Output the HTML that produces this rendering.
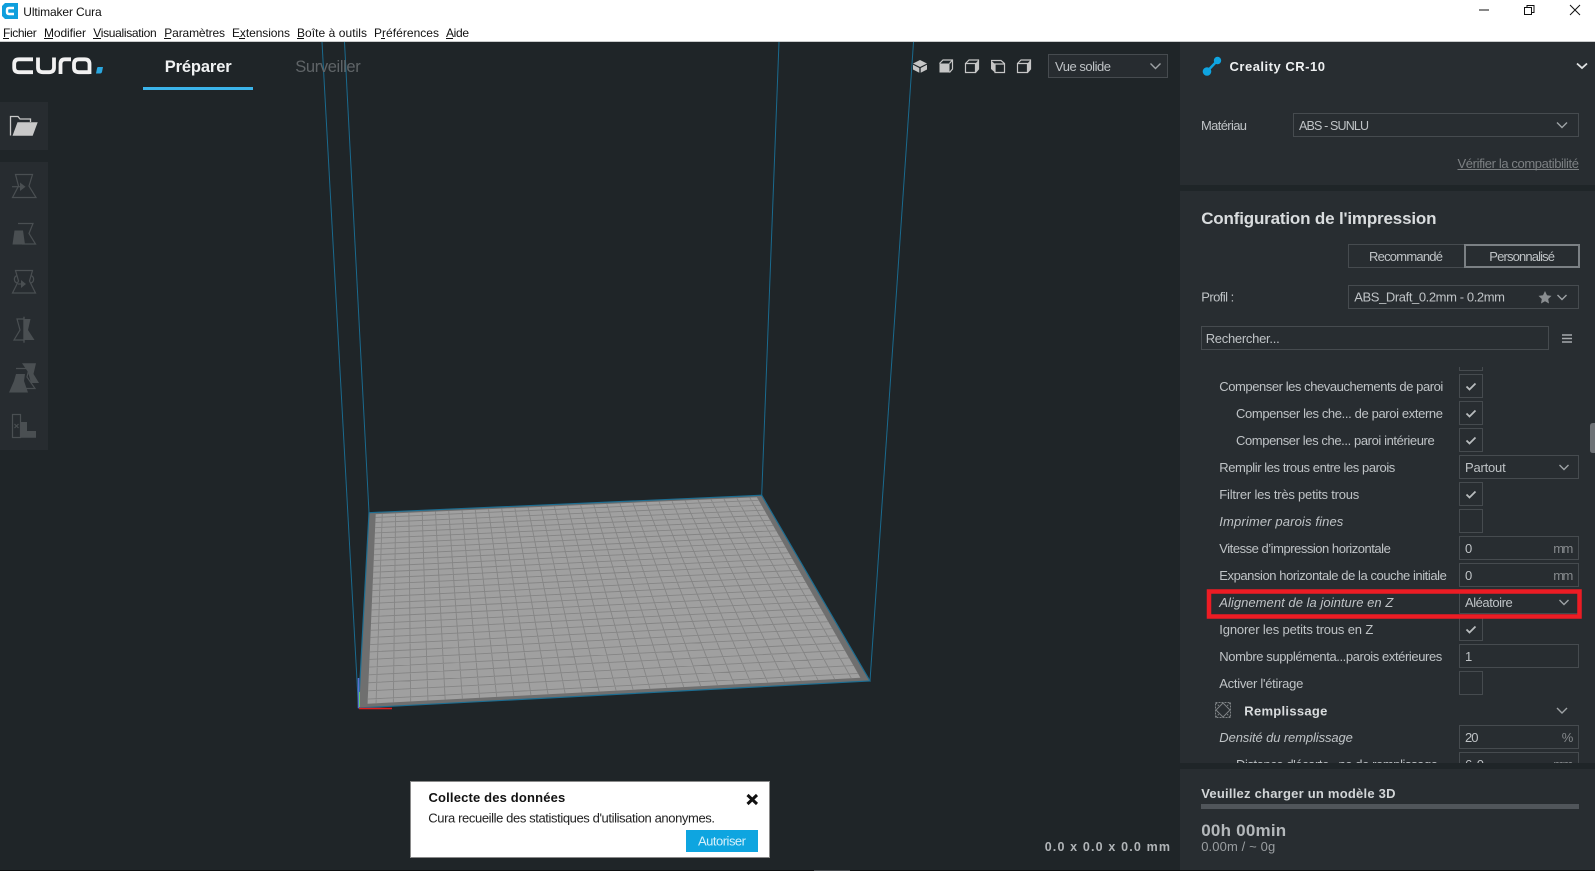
<!DOCTYPE html>
<html lang="fr"><head><meta charset="utf-8"><title>Ultimaker Cura</title>
<style>
html,body{margin:0;padding:0;background:#1f2528;overflow:hidden}
svg{display:block}
text{font-family:"Liberation Sans",sans-serif;font-size:13px;fill:#bfc3c6;white-space:pre}
.m{font-size:12px;fill:#111}
.b{font-weight:bold}
.i{font-style:italic}
.box{fill:none;stroke:#464b4f;stroke-width:1;shape-rendering:crispEdges}
.chev{fill:none;stroke:#9fa3a6;stroke-width:1.4}
.ck{fill:none;stroke:#b8bcbe;stroke-width:1.8}
.u{stroke:#111;stroke-width:1;shape-rendering:crispEdges}
.ti{fill:none;stroke:#4a4f52;stroke-width:1.2}
.tf{fill:#4a4f52}
.vi{fill:none;stroke:#c6c6c6;stroke-width:1.2}
.vf{fill:#c6c6c6}
</style></head><body>
<svg xmlns="http://www.w3.org/2000/svg" width="1595" height="871" viewBox="0 0 1595 871">
<!-- backgrounds -->
<rect width="1595" height="871" fill="#1f2528"/>
<rect width="1595" height="41" fill="#fff"/>
<rect y="41" width="1595" height="1" fill="#c9cbcc"/>
<rect y="870" width="1595" height="1" fill="#0c0e0f"/>
<rect x="814" y="870" width="36" height="1" fill="#44484b"/>

<!-- title bar -->
<path d="M5 3H18V19H5L2 16V6Z" fill="#0f9fdd"/>
<path d="M14 8H9Q7 8 7 10V12Q7 14 9 14H14" fill="none" stroke="#fff" stroke-width="2.4"/>
<text class="m" x="23.3" y="16" textLength="78.4">Ultimaker Cura</text>
<g>
<text class="m" x="3" y="37" textLength="33.7">Fichier</text><path class="u" d="M3 38.500H9"/>
<text class="m" x="44" y="37" textLength="42">Modifier</text><path class="u" d="M44 38.500H53"/>
<text class="m" x="93.300" y="37" textLength="63.400">Visualisation</text><path class="u" d="M93 38.500H101"/>
<text class="m" x="164.300" y="37" textLength="60.700">Paramètres</text><path class="u" d="M164 38.500H171"/>
<text class="m" x="232" y="37" textLength="58">Extensions</text><path class="u" d="M239 38.500H245"/>
<text class="m" x="297" y="37" textLength="70">Boîte à outils</text><path class="u" d="M297 38.500H304"/>
<text class="m" x="374" y="37" textLength="65">Préférences</text><path class="u" d="M381 38.500H385"/>
<text class="m" x="446" y="37" textLength="23">Aide</text><path class="u" d="M446 38.500H453"/>
</g>
<path d="M1479 10H1489" stroke="#111" stroke-width="1" shape-rendering="crispEdges"/>
<path d="M1524.500 7.500H1531.500V14.500H1524.500ZM1527 7.500V5.500H1534V12.500H1531.500" fill="none" stroke="#111" stroke-width="1" shape-rendering="crispEdges"/>
<path d="M1570 5L1580 15M1580 5L1570 15" stroke="#111" stroke-width="1"/>

<!-- build volume -->
<g fill="none" stroke="#1a6a8e" stroke-width="1">
<path d="M322 42L358.500 708"/>
<path d="M344.500 42L369 512.700"/>
<path d="M779 42L761.700 495.300"/>
<path d="M913.500 42L870 681"/>
</g>
<!-- bed -->
<g id="bed">
<polygon points="369,512.700 761.700,495.300 870,681 358.500,708" fill="#6f6f6f"/>
</g>
<g id="grid"></g>
<polygon points="369,512.700 761.700,495.300 870,681 358.500,708" fill="none" stroke="#1c6d91" stroke-width="1.200"/>
<path d="M358.500 678V708" stroke="#5a6fd0" stroke-width="1.500"/>
<path d="M359.500 692V707" stroke="#62c66a" stroke-width="1"/>
<path d="M359 708.500H392" stroke="#e01f1f" stroke-width="1.500"/>

<!-- logo -->
<g fill="none" stroke="#f1f1f1" stroke-width="3.800">
<path d="M33 59.300H19Q14.200 59.300 14.200 64V67.500Q14.200 72.200 19 72.200H33"/>
<path d="M38 57.500V67.500Q38 72.200 43 72.200H49Q54 72.200 54 67.500V57.500"/>
<path d="M60.500 74V64Q60.500 59.300 65 59.300H71"/>
<path d="M89.500 72.200H79Q74 72.200 74 67.500V64Q74 59.300 79 59.300H84.500Q89.500 59.300 89.500 64V74"/>
</g>
<path d="M98 67H103L102 72Q101.500 73.500 100 73.500H96L97 68.500Q97.200 67 98 67Z" fill="#2aa7df"/>
<text class="b" x="164.700" y="72" textLength="67" style="font-size:16.500px;fill:#f0f2f3">Préparer</text>
<rect x="143" y="87" width="110" height="3" fill="#3bb4ea"/>
<text x="295.300" y="72" textLength="65.400" style="font-size:16.500px;fill:#5f6467">Surveiller</text>

<!-- left toolbar -->
<rect y="102" width="48" height="48" fill="#272c30"/>
<rect y="162" width="48" height="288" fill="#272c30"/>
<path d="M10.500 135.500V116.500H18L20 119H30.500V122" fill="none" stroke="#c8c8c8" stroke-width="1.300"/>
<path d="M17.500 122.300H37.700L32.700 135.700H12.500Z" fill="#c8c8c8"/>
<!-- move -->
<path class="ti" d="M15.500 174.500H32.500L29 186L36 197.500H12.500L18.500 186Z"/>
<path d="M12 186.700H21" stroke="#4a4f52" stroke-width="1.200"/><path class="tf" d="M20 182.500L25.500 186.700L20 191Z"/>
<!-- scale -->
<path class="ti" d="M18 223.500H33L29 233.500L35.500 244H22"/>
<path class="tf" d="M14.500 230.500H23L25 244.500H12.500Z"/>
<!-- rotate -->
<path class="ti" d="M15.500 270.500H32.500L29.500 281L35.500 293H12.500L18.500 281Z"/>
<path class="ti" d="M17 275.500A4 4 0 0 0 17 283M31 275.500A4 4 0 0 1 31 283"/>
<path d="M18 284H23" stroke="#4a4f52" stroke-width="1.200"/><path class="tf" d="M21 280L26 284L21 288Z"/>
<!-- mirror -->
<path d="M24 316.700V342.700" stroke="#4a4f52" stroke-width="1.400"/>
<path class="ti" d="M24 319H17L20 330L14 340H24"/>
<path class="tf" d="M24 319H30.500L28 330L34.500 340H24Z"/>
<!-- per model -->
<path class="tf" d="M22 363.300H36L33.500 374L39 383H31L28 372Z"/>
<path class="ti" d="M16 368.500H29L27 377L35 388.500H22"/>
<path class="tf" d="M16 374H25L24 381L28 392.500H9L14 381Z"/>
<!-- support -->
<rect class="ti" x="12.500" y="414.500" width="8" height="23"/>
<path d="M14.500 424L18.500 428M18.500 424L14.500 428" stroke="#4a4f52" stroke-width="1.200"/>
<path class="tf" d="M20.700 422H27V431H36V437.700H20.700Z"/>

<!-- view icons -->
<path class="vf" d="M920 60L927 63.500L920 67L913 63.500Z"/>
<path class="vf" d="M913 64.800L919.300 68V72.700L913 69.500Z"/>
<path class="vf" d="M927 64.800L920.700 68V72.700L927 69.500Z"/>
<path class="vf" d="M939.500 63.500H949.500V72.500H939.500Z"/>
<path class="vi" d="M939.500 63.500L943 60H952.500V69L949.500 72.500M949.500 63.500L952.500 60"/>
<path class="vi" d="M965.500 63.500H975.500V72.500H965.500ZM965.500 63.500L969 60H978.500V69L975.500 72.500"/>
<path class="vf" d="M975.500 63.500L978.500 60V69L975.500 72.500Z"/>
<path class="vf" d="M991 60.500L995 64V72.500L991 69Z"/>
<path class="vi" d="M991 60.500H1001L1004.500 63.500V72.500H995V64H1004.500"/>
<path class="vi" d="M1017.500 63.500H1027.500V72.500H1017.500ZM1017.500 63.500L1021 60H1030.500V69L1027.500 72.500"/>
<path class="vf" d="M1027.500 63.500L1030.500 60V69L1027.500 72.500Z"/>
<rect x="1048.500" y="54.500" width="119" height="23" fill="#272c30" stroke="#464b4f" shape-rendering="crispEdges"/>
<text x="1055" y="71" textLength="56">Vue solide</text>
<path class="chev" d="M1150.500 63.500L1155.500 68.500L1160.500 63.500"/>

<!-- popup -->
<rect x="410.500" y="781.500" width="359" height="76" fill="#fff" stroke="#8a8a8a"/>
<text class="b" x="428.500" y="802" textLength="136.700" style="fill:#111">Collecte des données</text>
<text x="428.300" y="822.500" textLength="286.700" style="fill:#222">Cura recueille des statistiques d'utilisation anonymes.</text>
<path d="M747.500 795L757 804M757 795L747.500 804" stroke="#111" stroke-width="3"/>
<rect x="686" y="830" width="72" height="22" fill="#0ea5e0"/>
<text x="698" y="845.500" textLength="48" style="fill:#d6f0fb">Autoriser</text>

<text class="b" x="1044.700" y="851" textLength="125.300" style="font-size:12.500px;fill:#b0b4b7">0.0 x 0.0 x 0.0 mm</text>

<!-- right panels -->
<rect x="1180" y="42" width="415" height="143" fill="#282d31"/>
<rect x="1180" y="191" width="415" height="572" fill="#282d31"/>
<rect x="1180" y="769" width="415" height="101" fill="#282d31"/>

<path d="M1207 71.500L1217.500 60.500" stroke="#0fa4e0" stroke-width="2.500"/>
<circle cx="1207" cy="71.500" r="4.300" fill="#0fa4e0"/><circle cx="1217.500" cy="60.500" r="3.700" fill="#0fa4e0"/>
<text class="b" x="1229.500" y="71" textLength="95.500" style="fill:#eef0f1">Creality CR-10</text>
<path d="M1577 63.500L1582 68L1587 63.500" fill="none" stroke="#e0e2e3" stroke-width="1.800"/>

<text x="1201" y="130" textLength="46">Matériau</text>
<rect class="box" x="1293.500" y="113.500" width="285" height="23"/>
<text x="1299" y="130" textLength="70" style="font-size:12.500px">ABS - SUNLU</text>
<path class="chev" d="M1557 122.500L1562 127.500L1567 122.500"/>
<text x="1457.500" y="168" textLength="121.500" style="fill:#7c8083">Vérifier la compatibilité</text>
<path d="M1457.500 169.500H1579" stroke="#7c8083" stroke-width="1" shape-rendering="crispEdges"/>

<text class="b" x="1201.200" y="224" textLength="235.300" style="font-size:17px;fill:#d9dcde">Configuration de l'impression</text>
<rect class="box" x="1348.500" y="244.500" width="116" height="23"/>
<text x="1369" y="261" textLength="74">Recommandé</text>
<rect x="1465" y="245" width="114" height="22" fill="none" stroke="#7b8084" stroke-width="2" shape-rendering="crispEdges"/>
<text x="1489.300" y="261" textLength="65.700">Personnalisé</text>

<text x="1201.200" y="301.500" textLength="33">Profil :</text>
<rect class="box" x="1348.500" y="285.500" width="230" height="23"/>
<text x="1354.300" y="301.500" textLength="150.700">ABS_Draft_0.2mm - 0.2mm</text>
<path d="M1545 291L1547 295.300L1551.500 295.900L1548.200 299L1549 303.500L1545 301.300L1541 303.500L1541.800 299L1538.500 295.900L1543 295.300Z" fill="#8a8e91"/>
<path class="chev" d="M1557.500 295L1562 299.500L1566.500 295"/>

<rect class="box" x="1201.500" y="326.500" width="347" height="23"/>
<text x="1205.700" y="343" textLength="74">Rechercher...</text>
<path d="M1562 335H1572M1562 338.500H1572M1562 342H1572" stroke="#a6aaad" stroke-width="1.600"/>

<!-- settings list -->
<g>
<path class="box" d="M1459.500 367V370.500H1482.500V367"/>
<rect class="box" x="1459.500" y="374.500" width="23" height="23"/><path class="ck" d="M1466.500 386.500L1469.500 389.500L1475.500 383.500"/>
<text x="1219.300" y="391" textLength="224">Compenser les chevauchements de paroi</text>

<rect class="box" x="1459.500" y="401.500" width="23" height="23"/><path class="ck" d="M1466.500 413.500L1469.500 416.500L1475.500 410.500"/>
<text x="1236" y="418" textLength="207">Compenser les che... de paroi externe</text>

<rect class="box" x="1459.500" y="428.500" width="23" height="23"/><path class="ck" d="M1466.500 440.500L1469.500 443.500L1475.500 437.500"/>
<text x="1236" y="445" textLength="198.700">Compenser les che... paroi intérieure</text>

<rect class="box" x="1459.500" y="455.500" width="119" height="23"/>
<text x="1465" y="472" textLength="40.700">Partout</text><path class="chev" d="M1559.500 465L1564 469.500L1568.500 465"/>
<text x="1219.300" y="472" textLength="176">Remplir les trous entre les parois</text>

<rect class="box" x="1459.500" y="482.500" width="23" height="23"/><path class="ck" d="M1466.500 494.500L1469.500 497.500L1475.500 491.500"/>
<text x="1219.300" y="499" textLength="140">Filtrer les très petits trous</text>

<rect class="box" x="1459.500" y="509.500" width="23" height="23"/>
<text class="i" x="1219.300" y="526" textLength="124">Imprimer parois fines</text>

<rect class="box" x="1459.500" y="536.500" width="119" height="23"/>
<text x="1465" y="553">0</text><text x="1553.300" y="553" textLength="20" style="fill:#85898c">mm</text>
<text x="1219.300" y="553" textLength="171.500">Vitesse d’impression horizontale</text>

<rect class="box" x="1459.500" y="563.500" width="119" height="23"/>
<text x="1465" y="580">0</text><text x="1553.300" y="580" textLength="20" style="fill:#85898c">mm</text>
<text x="1219.300" y="580" textLength="227.500">Expansion horizontale de la couche initiale</text>

<rect class="box" x="1459.500" y="590.500" width="119" height="23"/>
<text x="1465" y="607" textLength="47.700">Aléatoire</text><path class="chev" d="M1559.500 600L1564 604.500L1568.500 600"/>
<text class="i" x="1219.300" y="607" textLength="174">Alignement de la jointure en Z</text>

<rect class="box" x="1459.500" y="617.500" width="23" height="23"/><path class="ck" d="M1466.500 629.500L1469.500 632.500L1475.500 626.500"/>
<text x="1219.300" y="634" textLength="154">Ignorer les petits trous en Z</text>

<rect class="box" x="1459.500" y="644.500" width="119" height="23"/>
<text x="1465" y="661">1</text>
<text x="1219.300" y="661" textLength="223">Nombre supplémenta...parois extérieures</text>

<rect class="box" x="1459.500" y="671.500" width="23" height="23"/>
<text x="1219.300" y="688" textLength="84">Activer l'étirage</text>

<g fill="none" stroke="#7d8184" stroke-width="1">
<rect x="1215.500" y="702.500" width="15" height="15" stroke-dasharray="2 1"/>
<path d="M1223 703L1230 710L1223 717L1216 710Z"/>
<path d="M1216 703L1219.500 706.500M1230 703L1226.500 706.500M1216 717L1219.500 713.500M1230 717L1226.500 713.500" stroke-dasharray="1.500 1"/>
</g>
<text class="b" x="1244.300" y="715.500" textLength="83" style="fill:#d9dcde">Remplissage</text>
<path class="chev" d="M1557 708L1562 713L1567 708"/>

<rect class="box" x="1459.500" y="725.500" width="119" height="23"/>
<text x="1465" y="742" textLength="13.500">20</text><text x="1561.700" y="742" textLength="11" style="fill:#85898c">%</text>
<text class="i" x="1219.300" y="742" textLength="133.500">Densité du remplissage</text>

<rect class="box" x="1459.500" y="752.500" width="119" height="23"/>
<text x="1465" y="769" textLength="19">6.0</text><text x="1553.300" y="769" textLength="20" style="fill:#85898c">mm</text>
<text x="1236" y="769" textLength="202">Distance d'écarte...ne de remplissage</text>
</g>
<rect x="1180" y="763" width="415" height="6" fill="#1f2528"/>
<rect x="1180" y="769" width="415" height="20" fill="#282d31"/>

<!-- scrollbar -->
<path d="M1595 423H1593Q1590 423 1590 426V450Q1590 453 1593 453H1595Z" fill="#6e7276"/>

<!-- red highlight -->
<rect x="1209" y="591.500" width="370.500" height="25" fill="none" stroke="#ed1c24" stroke-width="4.500"/>

<!-- bottom panel -->
<text class="b" x="1201.200" y="798" textLength="194.300" style="fill:#d2d5d7">Veuillez charger un modèle 3D</text>
<rect x="1201" y="804" width="378" height="5" fill="#50555a"/>
<text class="b" x="1201.200" y="836" textLength="85" style="font-size:17px;fill:#b4b8bb">00h 00min</text>
<text x="1201.200" y="851" textLength="74" style="fill:#9a9ea1">0.00m / ~ 0g</text>
</svg>
<script>
(function(){
var P=[[369,512.7],[761.7,495.3],[870,681],[358.5,708]];
var dx1=P[1][0]-P[2][0],dx2=P[3][0]-P[2][0],dx3=P[0][0]-P[1][0]+P[2][0]-P[3][0];
var dy1=P[1][1]-P[2][1],dy2=P[3][1]-P[2][1],dy3=P[0][1]-P[1][1]+P[2][1]-P[3][1];
var den=dx1*dy2-dx2*dy1,g=(dx3*dy2-dx2*dy3)/den,h=(dx1*dy3-dx3*dy1)/den;
var a=P[1][0]-P[0][0]+g*P[1][0],b=P[3][0]-P[0][0]+h*P[3][0],c=P[0][0];
var d=P[1][1]-P[0][1]+g*P[1][1],e=P[3][1]-P[0][1]+h*P[3][1],f=P[0][1];
function M(u,v){var w=g*u+h*v+1;return ((a*u+b*v+c)/w).toFixed(2)+' '+((d*u+e*v+f)/w).toFixed(2);}
var u0=.017,u1=.985,v0=.012,v1=.985;
var s='<path fill="#a0a0a0" d="M'+M(u0,v0)+'L'+M(u1,v0)+'L'+M(u1,v1)+'L'+M(u0,v1)+'Z"/>';
var l='';
for(var i=1;i<30;i++){var t=i/30;
 l+='M'+M(t,v0)+'L'+M(t,v1)+'M'+M(u0,t)+'L'+M(u1,t);}
s+='<path fill="none" stroke="#858585" stroke-width="0.9" d="'+l+'"/>';
document.getElementById('grid').innerHTML=s;
})();
</script>
</body></html>
